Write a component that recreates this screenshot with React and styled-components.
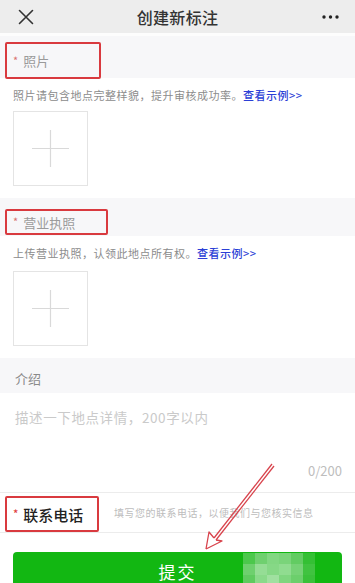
import React from "react"
import styled, { createGlobalStyle } from "styled-components"

const Global = createGlobalStyle`
  html, body { margin: 0; padding: 0; background: #fff; }
  body { font-family: "Noto Sans CJK SC", "Noto Sans", sans-serif; }
`

const Page = styled.div`
  position: relative;
  width: 355px;
  height: 583px;
  overflow: hidden;
  background: #fff;
`

const NavBar = styled.div`
  height: 33px;
  background: #ededed;
  display: grid;
  grid-template-columns: 60px 1fr 60px;
  align-items: center;
  border-bottom: 3px solid #fdfdfd;
`

const NavTitle = styled.div`
  text-align: center;
  font-size: 16px;
  font-weight: 500;
  color: #333;
  letter-spacing: 0.3px;
`

const NavIcon = styled.div`
  display: flex;
  justify-content: ${p => (p.$right ? "flex-end" : "flex-start")};
  padding: ${p => (p.$right ? "0 16px 0 0" : "0 0 0 18px")};
`

const SectionHead = styled.div`
  height: ${p => p.$h}px;
  background: #f7f7f9;
  display: flex;
  align-items: flex-end;
  padding-left: 5px;
`

const Marked = styled.div`
  width: ${p => p.$w}px;
  height: ${p => p.$bh}px;
  box-sizing: border-box;
  border: 2px solid #d93a3f;
  border-radius: 2px;
  display: flex;
  align-items: center;
  padding-left: 6px;
  margin-bottom: ${p => p.$mb || 0}px;
`

const Label = styled.span`
  font-size: ${p => (p.$strong ? 15 : 13)}px;
  font-weight: ${p => (p.$strong ? 500 : 400)};
  color: ${p => (p.$strong ? "#222" : "#9a9a9a")};
  display: flex;
  align-items: center;
`

const Star = styled.span`
  color: ${p => (p.$strong ? "#e03c3c" : "#d9706f")};
  font-size: 11px;
  margin-right: 5px;
  position: relative;
  top: -1px;
`

const PlainHead = styled.div`
  height: 35px;
  background: #f7f7f9;
  display: flex;
  align-items: center;
  padding: 6px 0 0 15px;
  box-sizing: border-box;
  font-size: 13px;
  color: #8a8a8a;
`

const Body = styled.div`
  padding: 10px 0 12px 13px;
  display: flex;
  flex-direction: column;
  gap: ${p => p.$gap}px;
`

const Hint = styled.div`
  font-size: 11px;
  line-height: 14px;
  letter-spacing: 0.5px;
  color: #8c8c8c;
  white-space: nowrap;
`

const Link = styled.span`
  color: #2b3fd6;
  font-weight: 500;
`

const Upload = styled.div`
  width: 75px;
  height: 75px;
  box-sizing: border-box;
  border: 1px solid #e4e4e4;
  display: flex;
  align-items: center;
  justify-content: center;
`

const TextArea = styled.div`
  height: 100px;
  box-sizing: border-box;
  padding: 15px 13px 0 15px;
  display: flex;
  flex-direction: column;
  border-bottom: 1px solid #ececec;
`

const Placeholder = styled.div`
  font-size: 13.5px;
  letter-spacing: 0.6px;
  color: #cacaca;
  line-height: 18px;
`

const Counter = styled.div`
  margin-top: auto;
  margin-bottom: 12px;
  align-self: flex-end;
  font-size: 13px;
  color: #bdbdbd;
`

const PhoneRow = styled.div`
  height: 39px;
  display: flex;
  align-items: flex-end;
  padding-left: 5px;
  border-bottom: 1px solid #ececec;
`

const PhoneInput = styled.div`
  align-self: stretch;
  display: flex;
  align-items: center;
  margin-left: 10px;
  padding-left: 5px;
  font-size: 10px;
  letter-spacing: 0.5px;
  color: #bdbdbd;
  white-space: nowrap;
`

const Footer = styled.div`
  padding: 19px 13px 0 13px;
`

const Submit = styled.div`
  position: relative;
  height: 44px;
  border-radius: 4px;
  background: #12b712;
  display: flex;
  align-items: center;
  justify-content: center;
  color: #fff;
  font-size: 17px;
  letter-spacing: 2px;
  padding-bottom: 6px;
  box-sizing: border-box;
  overflow: hidden;
`

const Mosaic = styled.div`
  position: absolute;
  left: 230px;
  top: 1px;
  display: grid;
  grid-template-columns: repeat(6, 12px);
  grid-auto-rows: 11px;
`

const Cell = styled.div`
  background: ${p => p.$c};
`

const Arrow = styled.svg`
  position: absolute;
  left: 0;
  top: 0;
  pointer-events: none;
`

const mosaic = [
  "#4cc84c", "#6fd06f", "#82d782", "#7ad47a", "#62cc62", "#34c034",
  "#6ed06e", "#95dd95", "#86d886", "#90dc90", "#76d276", "#40c340",
  "#5fcb5f", "#8ada8a", "#a0e0a0", "#7fd67f", "#6ccf6c", "#3ac13a",
]

const Cross = () => (
  <svg width="16" height="16" viewBox="0 0 16 16">
    <path d="M1.5 1.5 L14.5 14.5 M14.5 1.5 L1.5 14.5" stroke="#333" strokeWidth="1.6" strokeLinecap="round" />
  </svg>
)

const Dots = () => (
  <svg width="17" height="4" viewBox="0 0 17 4">
    <circle cx="2" cy="2" r="1.7" fill="#222" />
    <circle cx="8.5" cy="2" r="1.7" fill="#222" />
    <circle cx="15" cy="2" r="1.7" fill="#222" />
  </svg>
)

const Plus = () => (
  <svg width="37" height="37" viewBox="0 0 37 37">
    <path d="M18.5 0 V37 M0 18.5 H37" stroke="#d9d9d9" strokeWidth="1.2" />
  </svg>
)

export default function App() {
  return (
    <Page>
      <Global />
      <NavBar>
        <NavIcon><Cross /></NavIcon>
        <NavTitle>创建新标注</NavTitle>
        <NavIcon $right><Dots /></NavIcon>
      </NavBar>

      <SectionHead $h={42}>
        <Marked $w={96} $bh={37} $mb={-1}>
          <Label><Star>*</Star>照片</Label>
        </Marked>
      </SectionHead>
      <Body $gap={9}>
        <Hint>照片请包含地点完整样貌，提升审核成功率。<Link>查看示例&gt;&gt;</Link></Hint>
        <Upload><Plus /></Upload>
      </Body>

      <SectionHead $h={38}>
        <Marked $w={103} $bh={26} $mb={1}>
          <Label><Star>*</Star>营业执照</Label>
        </Marked>
      </SectionHead>
      <Body $gap={11}>
        <Hint>上传营业执照，认领此地点所有权。<Link>查看示例&gt;&gt;</Link></Hint>
        <Upload><Plus /></Upload>
      </Body>

      <PlainHead>介绍</PlainHead>
      <TextArea>
        <Placeholder>描述一下地点详情，200字以内</Placeholder>
        <Counter>0/200</Counter>
      </TextArea>

      <PhoneRow>
        <Marked $w={94} $bh={36} $mb={0}>
          <Label $strong><Star $strong>*</Star>联系电话</Label>
        </Marked>
        <PhoneInput>填写您的联系电话，以便我们与您核实信息</PhoneInput>
      </PhoneRow>

      <Footer>
        <Submit>
          提交
          <Mosaic>
            {mosaic.map((c, i) => <Cell key={i} $c={c} />)}
          </Mosaic>
        </Submit>
      </Footer>

      <Arrow width="355" height="583" viewBox="0 0 355 583">
        <g fill="none" stroke="#d8434c" strokeWidth="1.3" strokeLinejoin="round">
          <path d="M272 464 L214 538" />
          <path d="M274 466 L216 540" />
          <path d="M206 549 L209 532 L214 538 M206 549 L222 541 L216 540" />
        </g>
      </Arrow>
    </Page>
  )
}
